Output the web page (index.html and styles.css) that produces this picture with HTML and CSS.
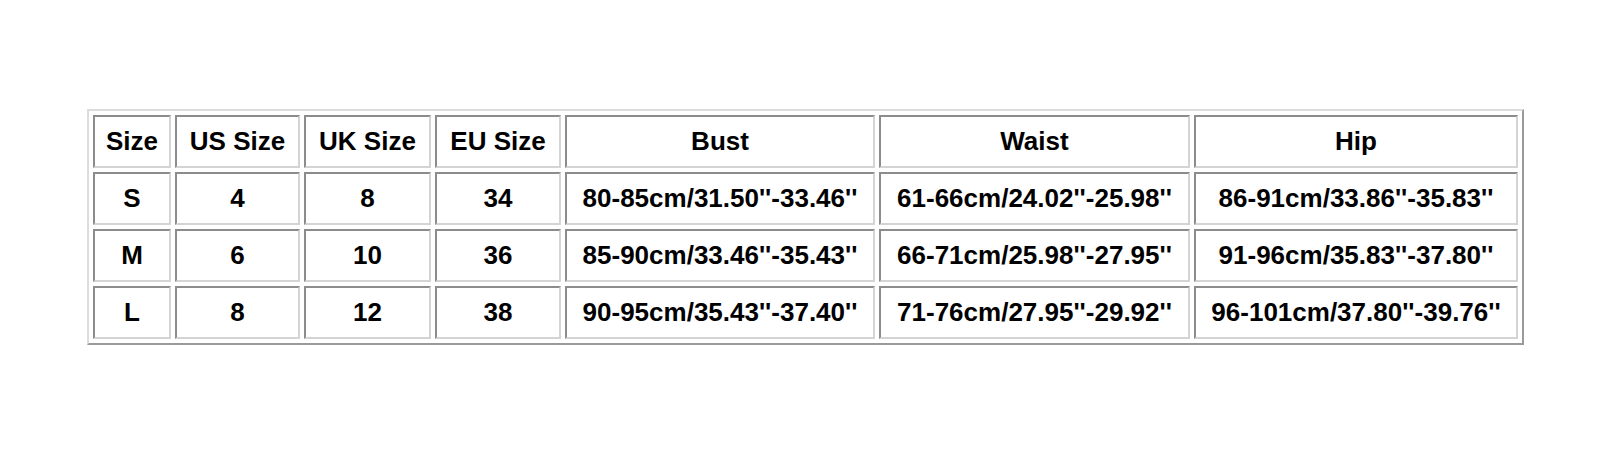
FILE: index.html
```html
<!DOCTYPE html>
<html>
<head>
<meta charset="utf-8">
<link rel="stylesheet" href="styles.css">
</head>
<body>
<div class="wrap">
<table class="sizes">
  <colgroup>
    <col class="c1"><col class="c2"><col class="c3"><col class="c4"><col class="c5"><col class="c6"><col class="c7">
  </colgroup>
  <tr class="head">
    <td>Size</td><td>US Size</td><td>UK Size</td><td>EU Size</td>
    <td>Bust</td><td>Waist</td><td>Hip</td>
  </tr>
  <tr>
    <td>S</td><td>4</td><td>8</td><td>34</td>
    <td>80-85cm/31.50''-33.46''</td><td>61-66cm/24.02''-25.98''</td><td>86-91cm/33.86''-35.83''</td>
  </tr>
  <tr>
    <td>M</td><td>6</td><td>10</td><td>36</td>
    <td>85-90cm/33.46''-35.43''</td><td>66-71cm/25.98''-27.95''</td><td>91-96cm/35.83''-37.80''</td>
  </tr>
  <tr>
    <td>L</td><td>8</td><td>12</td><td>38</td>
    <td>90-95cm/35.43''-37.40''</td><td>71-76cm/27.95''-29.92''</td><td>96-101cm/37.80''-39.76''</td>
  </tr>
</table>
</div>
</body>
</html>
```
FILE: styles.css
```css
html, body {
  margin: 0;
  padding: 0;
  background: #ffffff;
}
.wrap {
  padding: 109px 0 0 87px;
}
.sizes {
  box-sizing: border-box;
  width: 1437px;
  border-collapse: separate;
  border-spacing: 4px;
  border: 2px solid;
  border-color: #dcdcdc #9a9a9a #9a9a9a #dcdcdc;
  font-family: "Liberation Sans", Arial, sans-serif;
  font-weight: bold;
  font-size: 26px;
  color: #000;
  table-layout: fixed;
}
.sizes tr { height: 53px; }
.sizes td {
  border: 2px solid;
  border-color: #8c8c8c #d4d4d4 #d4d4d4 #8c8c8c;
  text-align: center;
  vertical-align: middle;
  padding: 0;
  white-space: nowrap;
}
.c1 { width: 78px; }
.c2 { width: 125px; }
.c3 { width: 127px; }
.c4 { width: 126px; }
.c5 { width: 310px; }
.c6 { width: 311px; }
.c7 { width: 324px; }
```
